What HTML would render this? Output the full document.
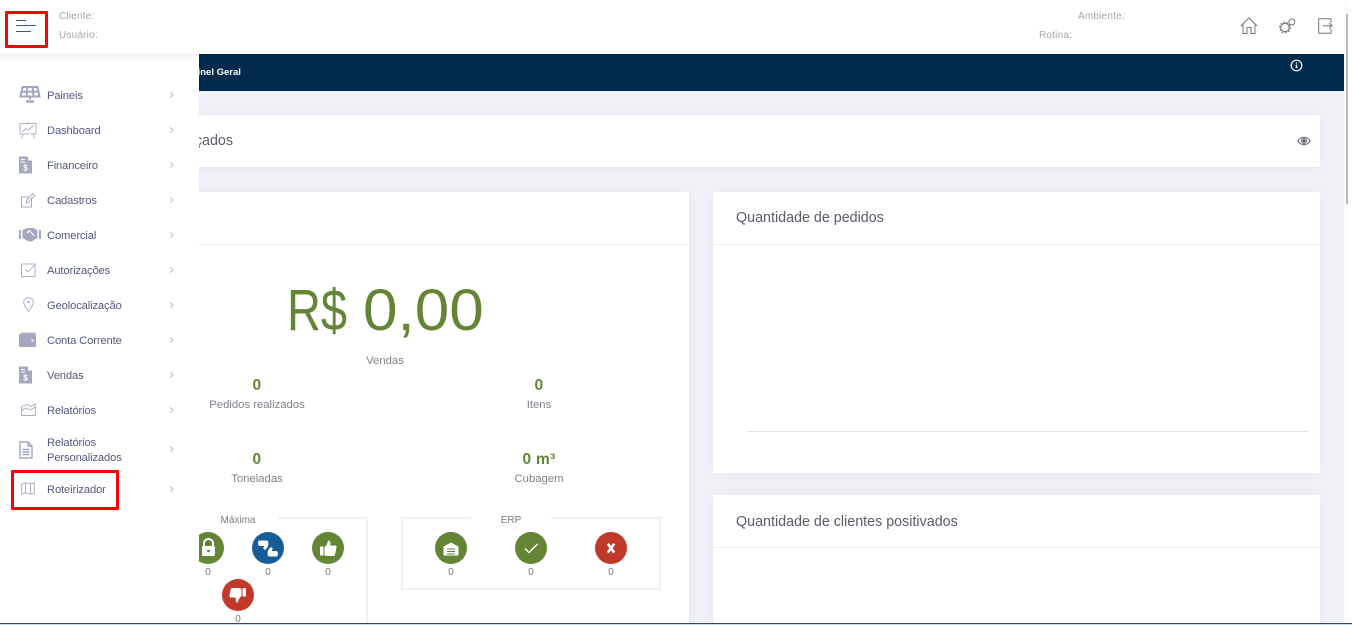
<!DOCTYPE html>
<html lang="pt"><head><meta charset="utf-8"><title>Painel Geral</title>
<style>
*{box-sizing:border-box}
html,body{margin:0;padding:0;width:1352px;height:625px;overflow:hidden;background:#fff;font-family:"Liberation Sans",sans-serif}
#app{position:relative;width:1352px;height:625px;overflow:hidden;background:#f0f1f7}
.a{position:absolute}
.t{position:absolute;white-space:nowrap;line-height:1}
.c{transform:translateX(-50%)}
.card{position:absolute;background:#fff;box-shadow:0 0 12px rgba(80,85,130,.05)}
.lab{font-size:11.3px;color:#7f8089}
.num{font-size:15.5px;font-weight:700;color:#648535;letter-spacing:.3px}
.ttl{font-size:14.3px;color:#595b66}
.m{position:absolute;left:47px;font-size:11.2px;line-height:15px;color:#55587f;letter-spacing:-.13px;white-space:nowrap}
.chev{position:absolute;left:169px}
.ic{position:absolute}
.dot{position:absolute;width:32px;height:32px;border-radius:50%}
.dot svg{position:absolute;left:0;top:0}
.g{background:#648535}.b{background:#165c96}.r{background:#c0392b}
.v{font-size:10px;color:#77787f}
.hdr{font-size:10px;color:#a5a5a5;letter-spacing:.2px}
</style></head><body><div id="app">

<!-- navy bar -->
<div class="a" style="left:0;top:54px;width:1344px;height:37px;background:#002a4e"></div>
<div class="t" style="left:186px;top:68px;font-size:9.5px;font-weight:700;color:#fff">Painel Geral</div>
<svg class="a" style="left:1290px;top:59px" width="13" height="13" viewBox="0 0 13 13" fill="none" stroke="#fff"><circle cx="6.5" cy="6.5" r="5.3" stroke-width="1.2"/><path d="M6.5 5.6v3.6" stroke-width="1.5"/><path d="M6.5 3.4v1.2" stroke-width="1.4"/></svg>

<!-- filter card -->
<div class="card" style="left:150px;top:115px;width:1170px;height:53px;border-bottom:1px solid #e6e6ea"></div>
<div class="t ttl" style="right:1119px;top:134px">Indicadores Avançados</div>
<svg class="a" style="left:1297px;top:136px" width="14" height="10" viewBox="0 0 14 10" fill="none" stroke="#555a66" stroke-width="1"><path d="M.8 5C3 2 5 1.2 7 1.2S11 2 13.2 5C11 8 9 8.8 7 8.8S3 8 .8 5z"/><circle cx="7" cy="5" r="2.4"/><circle cx="7" cy="5" r="1" fill="#555a66"/></svg>

<!-- left big card -->
<div class="card" style="left:150px;top:192px;width:539px;height:440px"></div>
<div class="a" style="left:150px;top:244px;width:539px;height:1px;background:#ececf0"></div>
<div class="t" style="left:287px;top:282px;font-size:58px;color:#648535;transform:scaleX(.81);transform-origin:0 0">R$</div>
<div class="t" style="left:363px;top:282px;font-size:58px;color:#648535;transform:scaleX(1.07);transform-origin:0 0">0,00</div>
<div class="t c lab" style="left:385px;top:356px">Vendas</div>
<div class="t c num" style="left:257px;top:378px">0</div>
<div class="t c lab" style="left:257px;top:400px">Pedidos realizados</div>
<div class="t c num" style="left:539px;top:378px">0</div>
<div class="t c lab" style="left:539px;top:400px">Itens</div>
<div class="t c num" style="left:257px;top:452px">0</div>
<div class="t c lab" style="left:257px;top:474px">Toneladas</div>
<div class="t c num" style="left:539px;top:452px">0 m³</div>
<div class="t c lab" style="left:539px;top:474px">Cubagem</div>

<!-- Maxima fieldset -->
<div class="a" style="left:150px;top:517px;width:218px;height:120px;border:2px solid #f1f1f1"></div>
<div class="a" style="left:199px;top:515px;width:79px;height:6px;background:#fff"></div>
<div class="t c" style="left:238px;top:516px;font-size:10px;color:#77787f">Máxima</div>

<div class="dot g" style="left:192px;top:532px"><svg width="32" height="32" viewBox="0 0 32 32"><path d="M12 14.5v-3a4.5 4.5 0 0 1 9 0v3" fill="none" stroke="#fff" stroke-width="2"/><rect x="10" y="14" width="13" height="10" rx="1.5" fill="#fff"/><circle cx="16.500" cy="19" r="1.4" fill="#648535"/></svg></div>
<div class="dot b" style="left:252px;top:532px"><svg width="32" height="32" viewBox="0 0 32 32" fill="#fff"><path id="q" d="M8 8.500h6.500c1.200 0 1.800.7 1.800 1.800v2.200c0 2-1.300 4-3.300 5.500l-1.800-1.200 1-2.800H8c-1.100 0-1.800-.7-1.800-1.500v-2.500c0-.9.700-1.500 1.800-1.500z"/><path transform="rotate(180 16 16.500)" d="M8 8.500h6.500c1.200 0 1.800.7 1.800 1.800v2.200c0 2-1.300 4-3.300 5.500l-1.800-1.200 1-2.800H8c-1.100 0-1.800-.7-1.800-1.500v-2.500c0-.9.700-1.500 1.800-1.500z"/></svg></div>
<div class="dot g" style="left:312px;top:532px"><svg width="32" height="32" viewBox="0 0 32 32" fill="#fff"><rect x="8" y="14.500" width="3.500" height="9" rx=".7"/><path d="M12.500 15c2-1.500 3-3.500 3.500-6.500 2 0 2.800 1.500 2.200 5h4.800c1.200 0 1.800 1 1.500 2l-1.500 7c-.2.800-.8 1.500-1.800 1.500h-6c-1 0-2-.5-2.700-1z"/></svg></div>
<div class="dot r" style="left:222px;top:579px"><svg width="32" height="32" viewBox="0 0 32 32" fill="#fff"><rect x="20.500" y="9" width="3.500" height="8.500" rx=".7"/><path d="M19.500 17c-2 1.500-3 3.500-3.500 6.500-2 0-2.800-1.500-2.200-5H9c-1.200 0-1.800-1-1.500-2l1.200-6c.2-.8.8-1.500 1.800-1.500h6.500c1 0 2 .5 2.500 1z"/></svg></div>
<div class="t c v" style="left:208px;top:568px">0</div>
<div class="t c v" style="left:268px;top:568px">0</div>
<div class="t c v" style="left:328px;top:568px">0</div>
<div class="t c v" style="left:238px;top:615px">0</div>

<!-- ERP fieldset -->
<div class="a" style="left:401px;top:517px;width:260px;height:73px;border:2px solid #f1f1f1"></div>
<div class="a" style="left:471px;top:515px;width:80px;height:6px;background:#fff"></div>
<div class="t c" style="left:511px;top:516px;font-size:10px;color:#77787f">ERP</div>
<div class="dot g" style="left:435px;top:532px"><svg width="32" height="32" viewBox="0 0 32 32"><path d="M8.500 14.500 16 10.500l7.500 4v9h-15z" fill="#fff"/><path d="M12 17h8M12 19.500h8M12 22h8" stroke="#648535" stroke-width="1.100"/></svg></div>
<div class="dot g" style="left:515px;top:532px"><svg width="32" height="32" viewBox="0 0 32 32"><path d="M10 16.500l4 4 8.500-8.500" fill="none" stroke="#fff" stroke-width="1.500"/></svg></div>
<div class="dot r" style="left:595px;top:532px"><svg width="32" height="32" viewBox="0 0 32 32"><path d="M12.800 11.800l6.400 8.800M19.200 11.800l-6.400 8.800" fill="none" stroke="#fff" stroke-width="2.600"/></svg></div>
<div class="t c v" style="left:451px;top:568px">0</div>
<div class="t c v" style="left:531px;top:568px">0</div>
<div class="t c v" style="left:611px;top:568px">0</div>

<!-- right cards -->
<div class="card" style="left:713px;top:192px;width:607px;height:281px"></div>
<div class="a" style="left:713px;top:244px;width:607px;height:1px;background:#ececf0"></div>
<div class="t ttl" style="left:736px;top:211px">Quantidade de pedidos</div>
<div class="a" style="left:747px;top:431px;width:561px;height:1px;background:#dfe0e5"></div>
<div class="card" style="left:713px;top:495px;width:607px;height:140px"></div>
<div class="a" style="left:713px;top:547px;width:607px;height:1px;background:#ececf0"></div>
<div class="t ttl" style="left:736px;top:515px">Quantidade de clientes positivados</div>

<!-- sidebar -->
<div class="a" style="left:0;top:54px;width:199px;height:571px;background:#fff"></div>
<div class="a" style="left:0;top:54px;width:199px;height:8px;background:linear-gradient(#f3f3f5,#fff)"></div>

<!-- menu icons -->
<svg class="ic" style="left:19px;top:86px" width="22" height="18" viewBox="0 0 22 18" fill="none" stroke="#a4a7c0" stroke-width="2"><path d="M3.500 1h15l2 9.500h-19z"/><path d="M2.200 5.700h17.600M8.300 1l-.8 9.500M13.700 1l.8 9.500"/><path d="M11 10.500v3" /><path d="M7 15.500h8" stroke-width="2.400"/></svg>
<svg class="ic" style="left:19px;top:121px" width="18" height="18" viewBox="0 0 18 18" fill="none" stroke="#a8abc2" stroke-width=".9"><rect x="1" y="2.500" width="16" height="10.500"/><path d="M3 11l4-3.500 2.500 1.500 5-4.500M4 13l-1.500 4M14 13l1.500 4M9 1v1.500"/></svg>
<svg class="ic" style="left:19px;top:156px" width="13" height="18" viewBox="0 0 13 18"><path d="M0 .5h8.500L13 5v12.500H0z" fill="#a6a9c1"/><path d="M9 .5V4.500h4z" fill="#fff"/><path d="M2 3.500h4M2 6h4" stroke="#fff"/><text x="6.500" y="14.500" font-size="8" font-weight="700" fill="#fff" text-anchor="middle" font-family="Liberation Sans">$</text></svg>
<svg class="ic" style="left:20px;top:192px" width="16" height="16" viewBox="0 0 16 16" fill="none" stroke="#a6a9c1" stroke-width="1"><path d="M11.500 5.500v9.500H1.500V5h7"/><path d="M6 11l.7-2.500L12.500 1.500l2 1.700-6 7z"/></svg>
<svg class="ic" style="left:19px;top:227px" width="22" height="15" viewBox="0 0 22 15"><rect x="0" y="3" width="2" height="9" fill="#a4a7c0"/><rect x="20" y="3" width="2" height="9" fill="#a4a7c0"/><path d="M3.500 3L8 1h6l4.500 2v8l-6 3.500h-3L3.500 11z" fill="#a4a7c0"/><path d="M8 6l2-2.500 5.500 5.500" fill="none" stroke="#fff" stroke-width="1.100"/></svg>
<svg class="ic" style="left:21px;top:263px" width="15" height="14" viewBox="0 0 15 14" fill="none" stroke="#a6a9c1" stroke-width=".9"><rect x=".5" y="1" width="13.500" height="12.500"/><path d="M4 6.500l3 2.500 7-7.500"/></svg>
<svg class="ic" style="left:23px;top:297px" width="11" height="15" viewBox="0 0 11 15" fill="none" stroke="#a6a9c1" stroke-width=".9"><path d="M5.500 14.300C2.500 10.500.7 8 .7 5.500a4.800 4.800 0 0 1 9.600 0c0 2.500-1.800 5-4.800 8.800z"/><path d="M5.500 3.500v3M4 5h3"/></svg>
<svg class="ic" style="left:19px;top:332px" width="17" height="15" viewBox="0 0 17 15"><path d="M1 2.500L2.500 .5h14v1.500H3z" fill="#b3b5ca"/><rect x="0" y="2" width="17" height="13" rx="1.500" fill="#a4a7c0"/><rect x="12.500" y="7.500" width="2" height="2" fill="#fff"/></svg>
<svg class="ic" style="left:19px;top:366px" width="13" height="18" viewBox="0 0 13 18"><path d="M0 .5h8.500L13 5v12.500H0z" fill="#a6a9c1"/><path d="M9 .5V4.500h4z" fill="#fff"/><path d="M2 3.500h4M2 6h4" stroke="#fff"/><text x="6.500" y="14.500" font-size="8" font-weight="700" fill="#fff" text-anchor="middle" font-family="Liberation Sans">$</text></svg>
<svg class="ic" style="left:21px;top:403px" width="15" height="13" viewBox="0 0 15 13" fill="none" stroke="#a6a9c1" stroke-width=".9"><path d="M.7 3.500v9h13.600V.8L10 3.500 6 1.500z"/><path d="M.7 7.500 5 5l4 2 5.300-3"/></svg>
<svg class="ic" style="left:19px;top:441px" width="14" height="18" viewBox="0 0 14 18" fill="none" stroke="#a4a7c0" stroke-width="1.400"><path d="M1 1h8l4 4v12H1z"/><path d="M9 1v4h4M3.500 8.500h7M3.500 11h7M3.500 13.500h7"/></svg>
<svg class="ic" style="left:21px;top:482px" width="14" height="13" viewBox="0 0 14 13" fill="none" stroke="#a6a9c1" stroke-width=".9"><path d="M.7 2 4.500.7l5 1.300L13.300.7v10.300l-3.800 1.300-5-1.300L.7 12.300z"/><path d="M4.500.7v10.600M9.500 2v10.300"/></svg>

<!-- menu labels -->
<div class="m" style="top:89px">Paineis</div>
<div class="m" style="top:124px">Dashboard</div>
<div class="m" style="top:159px">Financeiro</div>
<div class="m" style="top:194px">Cadastros</div>
<div class="m" style="top:229px">Comercial</div>
<div class="m" style="top:264px">Autorizações</div>
<div class="m" style="top:299px">Geolocalização</div>
<div class="m" style="top:334px">Conta Corrente</div>
<div class="m" style="top:369px">Vendas</div>
<div class="m" style="top:404px">Relatórios</div>
<div class="m" style="top:436px">Relatórios</div>
<div class="m" style="top:451px">Personalizados</div>
<div class="m" style="top:483px">Roteirizador</div>

<!-- chevrons -->
<svg class="chev" style="top:91px" width="5" height="8" viewBox="0 0 5 8"><path d="M1.200 1.200 4 4 1.200 6.800" fill="none" stroke="#bcbdc3" stroke-width=".9"/></svg>
<svg class="chev" style="top:126px" width="5" height="8" viewBox="0 0 5 8"><path d="M1.200 1.200 4 4 1.200 6.800" fill="none" stroke="#bcbdc3" stroke-width=".9"/></svg>
<svg class="chev" style="top:161px" width="5" height="8" viewBox="0 0 5 8"><path d="M1.200 1.200 4 4 1.200 6.800" fill="none" stroke="#bcbdc3" stroke-width=".9"/></svg>
<svg class="chev" style="top:196px" width="5" height="8" viewBox="0 0 5 8"><path d="M1.200 1.200 4 4 1.200 6.800" fill="none" stroke="#bcbdc3" stroke-width=".9"/></svg>
<svg class="chev" style="top:231px" width="5" height="8" viewBox="0 0 5 8"><path d="M1.200 1.200 4 4 1.200 6.800" fill="none" stroke="#bcbdc3" stroke-width=".9"/></svg>
<svg class="chev" style="top:266px" width="5" height="8" viewBox="0 0 5 8"><path d="M1.200 1.200 4 4 1.200 6.800" fill="none" stroke="#bcbdc3" stroke-width=".9"/></svg>
<svg class="chev" style="top:301px" width="5" height="8" viewBox="0 0 5 8"><path d="M1.200 1.200 4 4 1.200 6.800" fill="none" stroke="#bcbdc3" stroke-width=".9"/></svg>
<svg class="chev" style="top:336px" width="5" height="8" viewBox="0 0 5 8"><path d="M1.200 1.200 4 4 1.200 6.800" fill="none" stroke="#bcbdc3" stroke-width=".9"/></svg>
<svg class="chev" style="top:371px" width="5" height="8" viewBox="0 0 5 8"><path d="M1.200 1.200 4 4 1.200 6.800" fill="none" stroke="#bcbdc3" stroke-width=".9"/></svg>
<svg class="chev" style="top:406px" width="5" height="8" viewBox="0 0 5 8"><path d="M1.200 1.200 4 4 1.200 6.800" fill="none" stroke="#bcbdc3" stroke-width=".9"/></svg>
<svg class="chev" style="top:445px" width="5" height="8" viewBox="0 0 5 8"><path d="M1.200 1.200 4 4 1.200 6.800" fill="none" stroke="#bcbdc3" stroke-width=".9"/></svg>
<svg class="chev" style="top:485px" width="5" height="8" viewBox="0 0 5 8"><path d="M1.200 1.200 4 4 1.200 6.800" fill="none" stroke="#bcbdc3" stroke-width=".9"/></svg>

<!-- red highlight -->
<div class="a" style="left:11px;top:470px;width:108px;height:40px;border:3px solid #f00;border-radius:1px"></div>

<!-- header -->
<div class="a" style="left:0;top:0;width:1344px;height:54px;background:#fff"></div>
<div class="a" style="left:5px;top:11px;width:43px;height:37px;border:3px solid #f00;border-radius:1px"></div>
<div class="a" style="left:16px;top:20px;width:10px;height:1px;background:#3855a5"></div>
<div class="a" style="left:16px;top:25px;width:20px;height:1px;background:#3855a5"></div>
<div class="a" style="left:16px;top:31px;width:15px;height:1px;background:#3855a5"></div>
<div class="t hdr" style="left:59px;top:12px">Cliente:</div>
<div class="t hdr" style="left:59px;top:31px">Usuário:</div>
<div class="t hdr" style="left:1078px;top:12px">Ambiente:</div>
<div class="t hdr" style="left:1039px;top:31px">Rotina:</div>
<svg class="a" style="left:1240px;top:17px" width="18" height="17" viewBox="0 0 18 17" fill="none" stroke="#777" stroke-width="1"><path d="M.8 9 9 1l8.200 8"/><path d="M3 7.500v9h4v-6h4v6h4v-9"/></svg>
<svg class="a" style="left:1279px;top:17px" width="17" height="17" viewBox="0 0 17 17" fill="none" stroke="#777"><circle cx="6" cy="10.500" r="4.200" stroke-width="1.100"/><circle cx="6" cy="10.500" r="5.300" stroke-width="1.200" stroke-dasharray="1.600 1.700"/><circle cx="12.800" cy="5" r="3" stroke-width="1"/></svg>
<svg class="a" style="left:1318px;top:18px" width="15" height="16" viewBox="0 0 15 16" fill="none" stroke="#777" stroke-width="1"><path d="M13 5V.7H.7v14.500H13V11"/><path d="M5 7.800h9M11 5l3 2.800-3 2.800"/></svg>

<!-- scrollbar -->
<div class="a" style="left:1344px;top:0;width:8px;height:625px;background:#fbfbfc"></div>
<div class="a" style="left:1346px;top:14px;width:2px;height:190px;background:#b9b9bb"></div>
<div class="a" style="left:1348px;top:0;width:4px;height:625px;background:#fff"></div>

<!-- bottom edge -->
<div class="a" style="left:0;top:623px;width:1352px;height:1px;background:#3f4650"></div>
<div class="a" style="left:0;top:624px;width:1352px;height:1px;background:#c9d8e8"></div>
</div></body></html>
